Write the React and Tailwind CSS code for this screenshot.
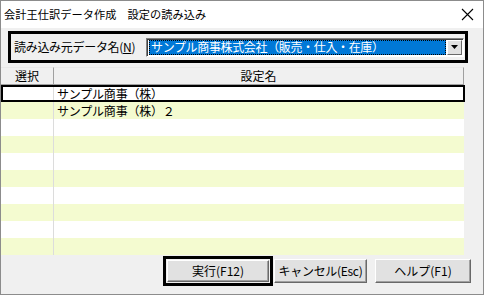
import React from "react";

const font = { fontFamily: '"Noto Sans CJK JP", "Noto Sans", sans-serif' };

function Btn({ children, className = "" }) {
  return (
    <div
      className={
        "flex items-center justify-center bg-[#e1e1e1] border border-t-white border-l-white border-r-[#696969] border-b-[#696969] shadow-[inset_-1px_-1px_0_#a0a0a0] text-[12px] leading-none text-black " +
        className
      }
    >
      {children}
    </div>
  );
}

export default function App() {
  const rows = Array.from({ length: 10 });
  const names = ["サンプル商事（株）", "サンプル商事（株）２"];
  return (
    <div
      className="w-[484px] h-[295px] flex flex-col bg-[#f0f0f0] border border-[#8c8c8c] overflow-hidden text-black"
      style={font}
    >
      {/* title bar */}
      <div className="h-[27px] bg-white flex items-center justify-between pl-[3px] pr-[9px] shrink-0">
        <span className="text-[11.2px] tracking-[0.05px] leading-none">会計王仕訳データ作成　設定の読み込み</span>
        <svg width="13" height="13" viewBox="0 0 13 13">
          <path d="M1 1 L12 12 M12 1 L1 12" stroke="#000" strokeWidth="1.1" fill="none" />
        </svg>
      </div>

      {/* combo row */}
      <div className="mt-[3px] ml-[7px] w-[460px] h-[32px] border-[3px] border-black flex items-center shrink-0">
        <span className="ml-[3px] w-[132px] text-[12px] leading-none tracking-[-0.3px]">
          読み込み元データ名(<span className="underline">N</span>)
        </span>
        <div className="w-[318px] h-[19px] flex items-stretch bg-white border border-t-[#828282] border-l-[#828282] border-b-white border-r-white shadow-[inset_1px_1px_0_#404040]">
          <div className="flex-1 ml-[2px] my-[1px] bg-[#0078d7] border border-dotted border-black flex items-center">
            <span className="ml-[1px] text-[12px] leading-none text-white tracking-[-0.35px] whitespace-nowrap">
              サンプル商事株式会社（販売・仕入・在庫）
            </span>
          </div>
          <div className="w-[15px] ml-[1px] mr-[1px] my-[1px] bg-[#e1e1e1] border border-t-white border-l-white border-r-[#696969] border-b-[#696969] flex items-center justify-center">
            <svg width="7" height="4" viewBox="0 0 7 4">
              <path d="M0 0 H7 L3.5 4 Z" fill="#000" />
            </svg>
          </div>
        </div>
      </div>

      {/* grid */}
      <div className="mt-[4px] w-[463px] flex flex-col shrink-0">
        <div className="h-[18px] flex text-[12px] leading-none">
          <div className="w-[53px] bg-[#f0f0f0] border-t border-t-[#e8e8e8] border-r border-b border-[#a0a0a0] flex items-center justify-center">
            選択
          </div>
          <div className="flex-1 bg-[#f0f0f0] border-t border-t-[#e8e8e8] border-r border-b border-[#a0a0a0] flex items-center justify-center">
            設定名
          </div>
        </div>
        {rows.map((_, i) => {
          const sel = i === 0;
          const bg = i % 2 === 0 ? "bg-white" : "bg-[#f4fbd0]";
          return (
            <div
              key={i}
              className={
                "h-[17px] flex text-[12px] leading-none " +
                bg +
                (sel ? " border-2 border-black w-[464px]" : "")
              }
            >
              <div className={"border-r border-[#dcdcdc] " + (sel ? "w-[51px]" : "w-[53px]")} />
              <div className={"flex-1 flex items-center tracking-[-0.2px] " + (sel ? "pl-[3px] pt-[1px]" : "pl-[3px]")}>
                {names[i] || ""}
              </div>
            </div>
          );
        })}
      </div>

      {/* buttons */}
      <div className="flex-1 flex items-start pt-[1px] pl-[162px]">
        <div className="w-[110px] h-[30px] border-[3px] border-black p-[1px] flex">
          <Btn className="flex-1">実行(F12)</Btn>
        </div>
        <Btn className="ml-[1px] mt-[3px] w-[93px] h-[24px] tracking-[-0.3px]">キャンセル(Esc)</Btn>
        <Btn className="ml-[8px] mt-[3px] w-[96px] h-[24px]">ヘルプ(F1)</Btn>
      </div>
    </div>
  );
}
